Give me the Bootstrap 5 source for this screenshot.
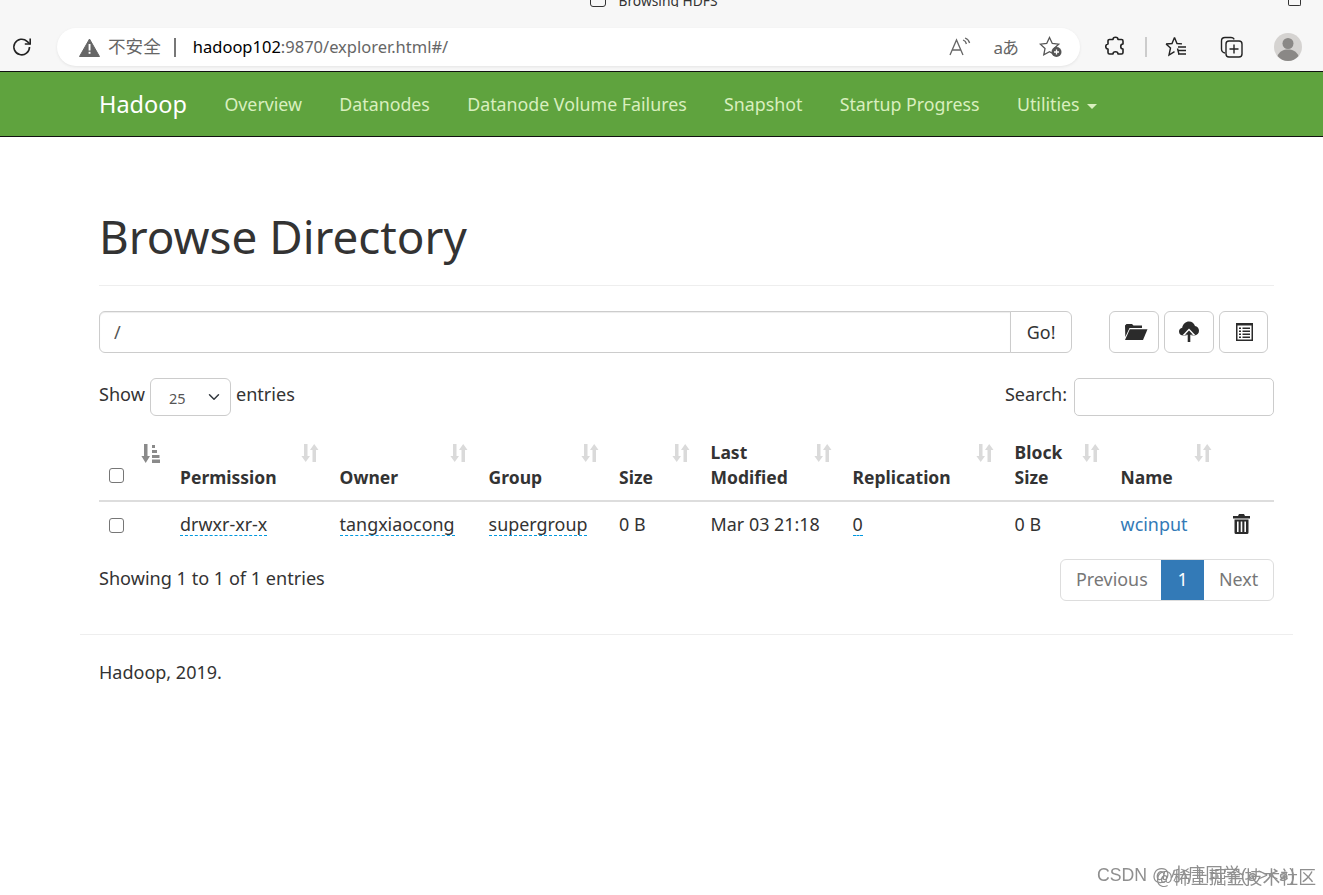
<!DOCTYPE html>
<html lang="en"><head><meta charset="utf-8"><title>Browsing HDFS</title>
<link href="https://cdn.jsdelivr.net/npm/bootstrap@5.3.0/dist/css/bootstrap.min.css" rel="stylesheet">
<style>
html,body{height:100%}
body{font-family:"Noto Sans","Noto Sans CJK SC",sans-serif;font-size:18.1px;color:#333;background:#fff;overflow:hidden;line-height:1.43}
.chrome{height:71px;background:#f7f7f7;position:relative}
.tabtitle{height:7px;overflow:hidden;font-size:13.8px;line-height:1;display:flex;justify-content:center;color:#333;gap:12px;padding-right:15px}
.tabtitle span{margin-top:-6px}
.tabtitle i{display:block;width:16px;height:16px;border:1.5px solid #333;border-radius:3px;margin-top:-9px}
.winbtn{position:absolute;right:22px;top:0;width:13px;height:6px;border:1.5px solid #333;border-top:0;border-radius:0 0 2px 2px}
.barrow{padding-top:21px;height:59px}
.addr{margin-left:57px;width:1023px;height:38px;background:#fff;border-radius:19px;box-shadow:0 1px 3px rgba(0,0,0,.08);font-size:16.5px;color:#666;padding:0 17px 0 22px}
.addr .cn{font-size:17.6px}
.addr .host{color:#000}
.addr .sep{width:2px;height:19px;background:#777;margin:0 17px 0 13px}
.ico{display:block;flex:none}
.hnav{height:66px;background:#5fa33e;border-top:1px solid #111;border-bottom:1px solid #111;padding:2px 0 0 99px;font-size:17.8px}
.brandname{color:#fff;font-size:23.5px;margin-right:37.5px;text-decoration:none}
.hnav a.item{color:#d9efbf;text-decoration:none;margin-right:37.3px}
.caretdn{display:inline-block;width:0;height:0;border-left:5px solid transparent;border-right:5px solid transparent;border-top:5px solid #d9efbf;margin-left:7px;vertical-align:middle}
.pagewrap{width:1213px;margin-left:80px}
.inner{padding:0 19px}
.pgtitle{font-size:45.8px;font-weight:400;line-height:1.2;margin:72px 0 0;color:#333}
.rule1{height:1px;background:#eee;margin-top:21px}
.pathrow{margin-top:25px;height:42px}
.pathbox{width:973px}
.pathbox .form-control{height:42px;border-color:#ccc;border-radius:6px 0 0 6px;font-size:18.1px;padding:6px 14px;color:#555;box-shadow:inset 0 1px 1px rgba(0,0,0,.075)}
.pathbox .btn{height:42px;border:1px solid #ccc;border-radius:0 6px 6px 0;font-size:17.9px;color:#333;padding:0 15.500px;margin-left:-1px;background:#fff}
.tool{width:50px;height:42px;border:1px solid #ccc;border-radius:6px;background:#fff;padding:0;display:flex;align-items:center;justify-content:center}
.tool.narrow{width:49px;padding-left:2px}
.tool.shifted{padding-left:4px}
.toolset{margin-left:37px;gap:5px}
.filters{margin-top:25px;height:38px}
.pagesel{width:81px;height:38px;border-color:#ccc;font-size:14.5px;padding:4px 10px 1px 18px;background-position:right 8px center;color:#555;margin:0 5px 0 5px}
.srch{width:200px;height:38px;border:1px solid #ccc;border-radius:5px;margin-left:7px;background:#fff}
.dtable{table-layout:fixed;width:1175px;margin:19px 0 0;border-collapse:collapse;color:#333}
.dtable th{position:relative;vertical-align:bottom;font-weight:700;font-size:17.5px;line-height:25px;padding:5px 10.600px 10px;border-bottom:2px solid #ddd;height:65px}
.dtable td{font-size:17.9px;line-height:25px;padding:10px 10.600px 12px;border:0}
.sorter{position:absolute;top:9px;right:10px}
.dot{border-bottom:1px dashed #0099e0;padding-bottom:0;display:inline-block;line-height:22px}
.cbx{appearance:none;display:block;width:15px;height:15px;border:1.4px solid #767676;border-radius:3px;margin:0 0 0 -1px;background:#fff}
.cbx.headbox{margin-bottom:7px}
.cbx.rowbox{margin-top:2px}
.wc{color:#337ab7;text-decoration:none}
.showing{height:42px;margin-top:10px}
.pgr{height:42px;border:1px solid #ddd;border-radius:6px;overflow:hidden;font-size:17.9px}
.pgr span{display:flex;align-items:center;height:100%}
.pgr .pv{padding:0 15px;color:#777;width:100px}
.pgr .cur{background:#337ab7;color:#fff;width:43px;justify-content:center}
.pgr .nx{padding:0 15px;color:#777;width:69px}
.rule2{height:1px;background:#eee;margin-top:33px}
.foot{font-size:18px;margin-top:25px;padding-left:19px}
.wm{position:absolute;left:1097px;top:863px;font-family:"Liberation Sans","Noto Sans CJK SC",sans-serif;font-size:17.7px;color:#8f8f8f;white-space:nowrap;filter:blur(.6px)}
.wm2{position:absolute;left:1156px;top:864px;font-family:"Noto Sans CJK SC",sans-serif;font-size:17.900px;color:#8f8f8f;white-space:nowrap;filter:blur(.6px)}
</style></head><body>
<div class="chrome">
 <div class="tabtitle"><i></i><span>Browsing HDFS</span></div><div class="winbtn"></div>
 <div class="barrow d-flex align-items-center">
  <svg class="ico position-absolute" style="left:11px;top:36px" width="22" height="22" viewBox="0 0 22 22" fill="none" stroke="#222" stroke-width="1.6"><path d="M18.500 11a7.800 7.800 0 1 1-2.400-5.600L19 8"/><path d="M19.200 2.500V8h-5.400"/></svg>
  <div class="addr d-flex align-items-center">
   <svg class="ico me-2" width="21" height="19" viewBox="0 0 21 19"><path d="M10.500 1 20.500 18.500H.5z" fill="#666" stroke="#666" stroke-linejoin="round"/><rect x="9.600" y="6" width="1.900" height="6.500" fill="#fff"/><rect x="9.600" y="13.800" width="1.900" height="2" fill="#fff"/></svg>
   <span class="cn">不安全</span><span class="sep"></span>
   <span><span class="host">hadoop102</span>:9870/explorer.html#/</span>
   <span class="ms-auto d-flex align-items-center" style="gap:21px">
    <svg class="ico" width="23" height="20" viewBox="0 0 23 20" fill="none" stroke="#666" stroke-width="1.3"><path d="M1 18 7.500 3 14 18M3.300 13h8.400"/><path d="M14 3c2 .6 3 2 3.400 4M16 1c2.600.8 4 2.600 4.600 5"/></svg>
    <span style="font-size:17px;color:#666;line-height:1;letter-spacing:-1px">aあ</span>
    <svg class="ico" width="24" height="22" viewBox="0 0 24 22" fill="none" stroke="#555" stroke-width="1.3"><path d="M10.500 1.500l2.800 6 6.400.7-4.700 4.400 1.200 6.200-5.700-3.100-5.700 3.100 1.200-6.200L1.300 8.200l6.400-.7z"/><circle cx="17.500" cy="16" r="5" fill="#555" stroke="none"/><path d="M17.500 13.500v5M15 16h5" stroke="#fff"/></svg>
   </span>
  </div>
  <svg class="ico position-absolute" style="left:1105px;top:36px" width="21" height="21" viewBox="0 0 21 21" fill="none" stroke="#222" stroke-width="1.6"><path d="M8 3.500c0-3 5-3 5 0h3.500a1.500 1.500 0 0 1 1.500 1.500v3c-3 0-3 5 0 5v3.500a1.500 1.500 0 0 1-1.500 1.500H13c0-3-5-3-5 0H4.500A1.500 1.500 0 0 1 3 16.500V13c-3 0-3-5 0-5V5a1.500 1.500 0 0 1 1.500-1.500z" stroke-linejoin="round"/></svg>
  <div class="position-absolute" style="left:1145px;top:37px;width:2px;height:20px;background:#ccc"></div>
  <svg class="ico position-absolute" style="left:1165px;top:36px" width="23" height="21" viewBox="0 0 23 21" fill="none" stroke="#222" stroke-width="1.4"><path d="M9.500 1.500l2.500 6 5 .4M12.500 12.500l1.400 5.500M1 8l6-.5 2.500-6M1 8l4.500 4-1.500 7 5.500-3.400"/><path d="M13 11h8M13 14.500h8M13 18h8"/></svg>
  <svg class="ico position-absolute" style="left:1220px;top:36px" width="23" height="22" viewBox="0 0 23 22" fill="none" stroke="#222" stroke-width="1.4"><path d="M5 17C2.500 16.500 1.500 15 1.500 13V5c0-2 1.500-3.500 3.500-3.500h6c1.500 0 2.500.6 3.300 1.800"/><rect x="6" y="5" width="16" height="16" rx="3"/><path d="M14 8.500v9M9.500 13h9"/></svg>
  <svg class="ico position-absolute" style="left:1274px;top:33px" width="28" height="28" viewBox="0 0 28 28"><circle cx="14" cy="14" r="14" fill="#d5d3d1"/><circle cx="14" cy="10.500" r="5.500" fill="#8a8886"/><path d="M3.500 23c2-5 6-6.500 10.500-6.500S22.500 18 24.500 23c-2.500 3-6.500 5-10.500 5S6 26 3.500 23z" fill="#8a8886"/></svg>
 </div>
</div>
<nav class="hnav d-flex align-items-center">
 <a class="brandname" href="#">Hadoop</a>
 <a class="item" href="#">Overview</a><a class="item" href="#">Datanodes</a><a class="item" href="#">Datanode Volume Failures</a><a class="item" href="#">Snapshot</a><a class="item" href="#">Startup Progress</a><a class="item" href="#">Utilities<span class="caretdn"></span></a>
</nav>
<div class="pagewrap">
 <div class="inner">
  <h1 class="pgtitle">Browse Directory</h1>
  <div class="rule1"></div>
  <div class="pathrow d-flex">
   <div class="input-group pathbox flex-nowrap"><input class="form-control" value="/" aria-label="path"><button class="btn" type="button">Go!</button></div>
   <div class="d-flex toolset">
    <button class="tool shifted" type="button" aria-label="folder"><svg width="24" height="18" viewBox="0 0 24 18" fill="#2b2b2b"><path d="M1 2.500 2.500 1h5.500l1.500 1.500h8.500V5H5.500L1.300 14z"/><path d="M5.800 6.200H23.500L19 17H1z"/></svg></button>
    <button class="tool" type="button" aria-label="upload"><svg width="20" height="21" viewBox="0 0 20 21" fill="#2b2b2b"><path d="M4.500 14.500C1.800 14.500 0 12.800 0 10.400c0-2 1.500-3.500 3.200-3.700C3.900 3 6.700 .5 10 .5c3 0 5.200 1.800 6 4.500 2.200.3 4 2.300 4 4.800 0 2.700-2 4.700-4.500 4.700z"/><path d="M10 7.500l6.500 6.800h-4V21h-5v-6.700h-4z" fill="#fff"/><path d="M10 9.500l4 4.300h-2.700V21H8.700v-7.200H6z"/></svg></button>
    <button class="tool narrow" type="button" aria-label="list"><svg width="17" height="18" viewBox="0 0 17 18"><rect width="17" height="18" fill="#2b2b2b"/><rect x="1.500" y="2.500" width="14" height="14" fill="#fff"/><path d="M3 4.500h2v1.500H3zM6.500 4.500h7.500v1.500H6.500zM3 7.500h2V9H3zM6.500 7.500h7.500V9H6.500zM3 10.500h2V12H3zM6.500 10.500h7.500V12H6.500zM3 13.500h2V15H3zM6.500 13.500h7.500V15H6.500z" fill="#2b2b2b"/></svg></button>
   </div>
  </div>
  <div class="filters d-flex justify-content-between align-items-start" style="line-height:32px">
   <div class="d-flex">Show<select class="form-select pagesel" aria-label="entries"><option>25</option></select>entries</div>
   <div class="d-flex">Search:<input class="srch" aria-label="search"></div>
  </div>
  <table class="dtable">
   <colgroup><col style="width:70.5px"><col style="width:159.5px"><col style="width:149px"><col style="width:130.5px"><col style="width:91.5px"><col style="width:142px"><col style="width:162px"><col style="width:106px"><col style="width:112px"><col style="width:52px"></colgroup>
   <thead><tr>
    <th><input class="cbx headbox" type="checkbox" aria-label="all"><svg class="sorter" width="19" height="19" viewBox="0 0 19 19" fill="#8a8a8a"><path d="M3 0h3.500v12H9l-4.300 7L.4 12H3z"/><path d="M11 1h3v3h-3zM11 6h5v3h-5zM11 11h7.500v3H11zM11 15.500h8V19h-8z"/></svg></th>
    <th>Permission<svg class="sorter" width="18" height="18" viewBox="0 0 18 18" fill="#dadada"><path d="M3 0h3.500v12H9l-4.300 6L.4 12H3zM11.500 18H15V6h2.500L13.200 0 9 6h2.500z"/></svg></th>
    <th>Owner<svg class="sorter" width="18" height="18" viewBox="0 0 18 18" fill="#dadada"><path d="M3 0h3.500v12H9l-4.300 6L.4 12H3zM11.500 18H15V6h2.500L13.200 0 9 6h2.500z"/></svg></th>
    <th>Group<svg class="sorter" width="18" height="18" viewBox="0 0 18 18" fill="#dadada"><path d="M3 0h3.500v12H9l-4.300 6L.4 12H3zM11.500 18H15V6h2.500L13.200 0 9 6h2.500z"/></svg></th>
    <th>Size<svg class="sorter" width="18" height="18" viewBox="0 0 18 18" fill="#dadada"><path d="M3 0h3.500v12H9l-4.300 6L.4 12H3zM11.500 18H15V6h2.500L13.200 0 9 6h2.500z"/></svg></th>
    <th>Last<br>Modified<svg class="sorter" width="18" height="18" viewBox="0 0 18 18" fill="#dadada"><path d="M3 0h3.500v12H9l-4.300 6L.4 12H3zM11.500 18H15V6h2.500L13.200 0 9 6h2.500z"/></svg></th>
    <th>Replication<svg class="sorter" width="18" height="18" viewBox="0 0 18 18" fill="#dadada"><path d="M3 0h3.500v12H9l-4.300 6L.4 12H3zM11.500 18H15V6h2.500L13.200 0 9 6h2.500z"/></svg></th>
    <th>Block<br>Size<svg class="sorter" width="18" height="18" viewBox="0 0 18 18" fill="#dadada"><path d="M3 0h3.500v12H9l-4.300 6L.4 12H3zM11.500 18H15V6h2.500L13.200 0 9 6h2.500z"/></svg></th>
    <th>Name<svg class="sorter" width="18" height="18" viewBox="0 0 18 18" fill="#dadada"><path d="M3 0h3.500v12H9l-4.300 6L.4 12H3zM11.500 18H15V6h2.500L13.200 0 9 6h2.500z"/></svg></th>
    <th></th>
   </tr></thead>
   <tbody><tr>
    <td><input class="cbx rowbox" type="checkbox" aria-label="row"></td>
    <td><span class="dot">drwxr-xr-x</span></td><td><span class="dot">tangxiaocong</span></td><td><span class="dot">supergroup</span></td><td>0 B</td><td>Mar 03 21:18</td><td><span class="dot">0</span></td><td>0 B</td><td><a class="wc" href="#">wcinput</a></td>
    <td><svg class="d-block" width="17" height="20" viewBox="0 0 17 20" fill="#2b2b2b"><path d="M6 0h5l1 2h5v2.500H0V2h5z"/><path d="M1.500 5.500h14V18.500a1.500 1.500 0 0 1-1.500 1.500H3a1.500 1.500 0 0 1-1.500-1.500zM4 7.500V18h1.600V7.500zM7.700 7.500V18h1.600V7.500zM11.400 7.500V18H13V7.500z" fill-rule="evenodd"/></svg></td>
   </tr></tbody>
  </table>
  <div class="showing d-flex justify-content-between align-items-start">
   <div style="line-height:38px">Showing 1 to 1 of 1 entries</div>
   <div class="pgr d-flex"><span class="pv">Previous</span><span class="cur">1</span><span class="nx">Next</span></div>
  </div>
 </div>
 <div class="rule2"></div>
 <div class="foot">Hadoop, 2019.</div>
</div>
<div class="wm">CSDN @小唐同学(๑&gt;&lt;๑)</div><div class="wm2">@稀土掘金技术社区</div>
</body></html>
